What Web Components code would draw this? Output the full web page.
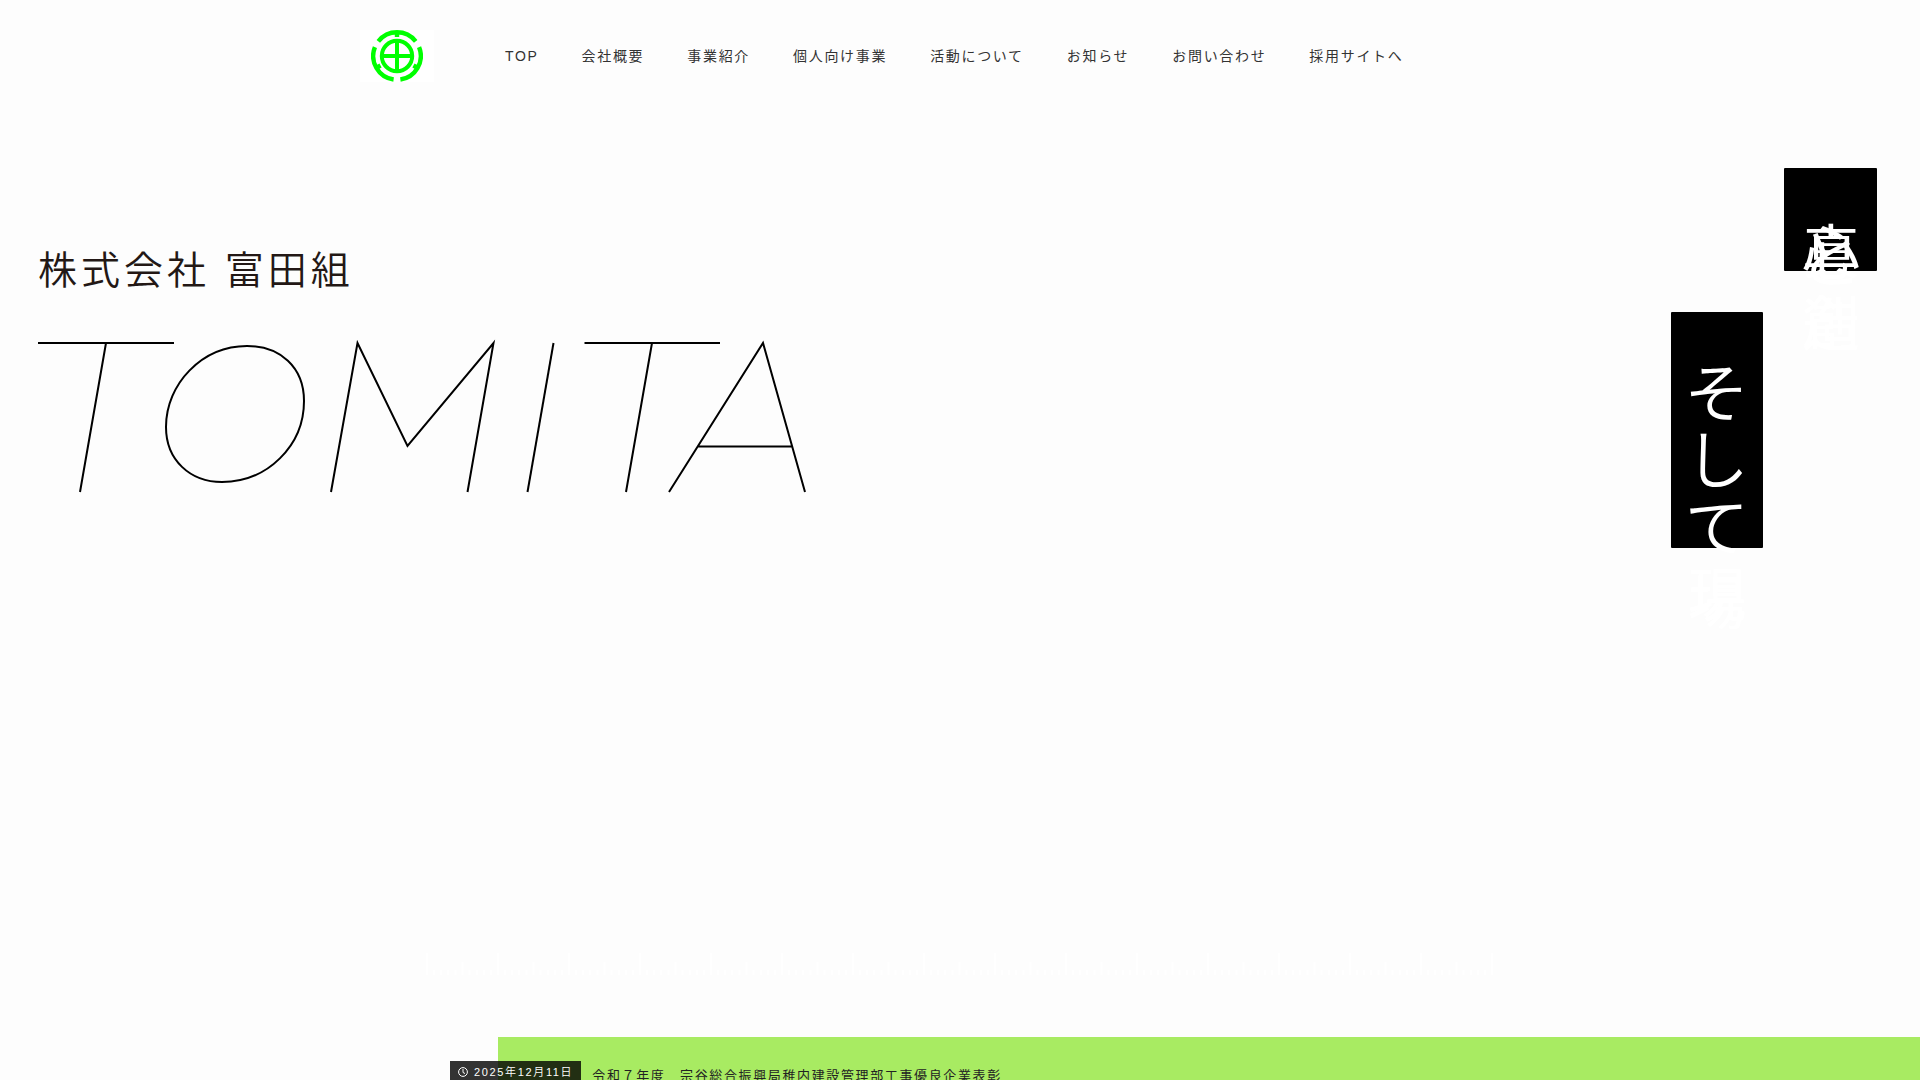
<!DOCTYPE html>
<html lang="ja">
<head>
<meta charset="utf-8">
<title>株式会社 富田組</title>
<style>
body { margin: 0; background: #fdfdfd; color: #333; font-family: "Liberation Sans", "Noto Sans CJK JP", sans-serif; overflow: hidden; }
</style>
</head>
<body>
<tomita-page></tomita-page>
<script>
const define = (name, html, after) => customElements.define(name, class extends HTMLElement {
  constructor() {
    super();
    this.attachShadow({ mode: "open" }).innerHTML = html;
    if (after) after(this.shadowRoot, this);
  }
});

define("brand-mark", `
<style>
:host { display: block; }
a { display: flex; background: #fff; padding: 0 11px; }
svg { display: block; width: 52px; height: 52px; }
</style>
<a href="#" aria-label="富田組">
<svg viewBox="0 0 52 52" fill="none" stroke="#0f0">
<circle cx="26" cy="26" r="15.2" stroke-width="4"/>
<path d="M26 10V42M10 26H42" stroke-width="4"/>
<g stroke-width="4.4">
<path id="arc" d="M7.300 11.300A23.800 23.800 0 0 1 44.700 11.300M26 3V7"/>
<use href="#arc" transform="rotate(120 26 26)"/>
<use href="#arc" transform="rotate(240 26 26)"/>
</g>
</svg></a>`);

define("nav-item", `
<style>
:host { display: block; }
a { color: inherit; text-decoration: none; font-size: 14px; line-height: 24px; letter-spacing: 0.12em; white-space: nowrap; }
</style>
<a href="#"><slot></slot></a>`);

define("site-header", `
<style>
:host { display: block; }
header { display: flex; align-items: center; width: 1200px; margin: 0 auto; padding-top: 30px; }
nav { display: flex; gap: 43px; margin-left: 71px; }
</style>
<header><brand-mark></brand-mark>
<nav><nav-item>TOP</nav-item><nav-item>会社概要</nav-item><nav-item>事業紹介</nav-item><nav-item>個人向け事業</nav-item><nav-item>活動について</nav-item><nav-item>お知らせ</nav-item><nav-item>お問い合わせ</nav-item><nav-item>採用サイトへ</nav-item></nav>
</header>`);

define("company-title", `
<style>
:host { display: block; }
h1 { margin: 0; font-size: 39px; line-height: 56px; font-weight: 350; letter-spacing: 4px; color: #231815; }
svg { display: block; width: 770px; height: 160px; margin-top: 37px; }
</style>
<h1>株式会社 富田組</h1>
<svg viewBox="0 0 770 160" fill="none" stroke="#000" stroke-width="2" role="img" aria-label="TOMITA">
<path d="M0 7H136M68 7L42 156"/>
<path d="M266 65C266 31 242 10 209 10C164 10 128 48 128 91C128 124 152 146 184 146C229 146 266 110 266 65Z"/>
<path d="M293 156L319.500 7L369.500 110L455.500 7L429.500 156"/>
<path d="M515.500 7L489.500 156"/>
<path d="M546.500 7H682M614 7L588 156"/>
<path d="M631 156L725 7L767 156M660 110.500H754"/>
</svg>`);

define("vertical-label", `
<style>
:host { display: block; }
p { margin: 0; box-sizing: border-box; width: var(--label-width, 92px); height: var(--label-height); padding: var(--label-inset, 48px) 0 0; border-radius: 1px; background: #000; color: #fff; writing-mode: vertical-rl; font-family: "Noto Sans CJK JP", sans-serif; font-size: 65px; line-height: 92px; letter-spacing: 2px; font-weight: 350; white-space: nowrap; }
</style>
<p><slot></slot></p>`);

define("catch-copy", `
<style>
:host { display: flex; flex-direction: row-reverse; align-items: flex-start; gap: 21px; }
.first { --label-height: 103px; --label-width: 93px; --label-inset: 54px; }
.second { --label-height: 236px; margin-top: 144px; }
/* kanji take almost no room along the line, so they pile up on the next character */
span { display: inline-block; height: 2px; font-size: 58px; font-weight: 400; }
.second span { height: 4px; padding-top: 4px; }
</style>
<vertical-label class="first"><span>真</span><span>心</span>と<span>創</span><span>造</span></vertical-label>
<vertical-label class="second">そして<span>現</span><span>場</span></vertical-label>`);

define("scale-ruler", `
<style>
:host { display: block; }
svg { display: block; width: 1068px; height: 22px; margin: 0 auto; }
</style>
<svg viewBox="0 0 1068 22" stroke="#fff" stroke-width="2"></svg>`, root => {
  let d = "";
  for (let i = 0; i <= 150; i++) {
    const h = i % 10 === 0 ? 22 : i % 5 === 0 ? 13 : 5;
    d += `M${(i * 7.1 + 1).toFixed(1)} 22v-${h}`;
  }
  root.querySelector("svg").innerHTML = `<path d="${d}"/>`;
});

define("news-bar", `
<style>
:host { display: block; }
.bar { display: flex; align-items: flex-start; gap: 11px; margin-left: calc(50% - 462px); padding: 24px 0; background: #a8eb62; }
time { display: flex; align-items: center; gap: 6px; margin-left: -48px; padding: 0 8px; background: rgba(0,0,0,.8); color: #fff; font-size: 11px; line-height: 22px; letter-spacing: 0.15em; font-weight: 350; }
svg { width: 10px; height: 10px; }
a { color: #222; text-decoration: none; font-size: 13px; line-height: 30px; letter-spacing: 0.125em; }
</style>
<div class="bar"><time datetime="2025-12-11"><svg viewBox="0 0 10 10" fill="none" stroke="#fff"><circle cx="5" cy="5" r="4.4"/><path d="M5 2V5.500L7 6.500"/></svg>2025年12月11日</time>
<a href="#">令和７年度　宗谷総合振興局稚内建設管理部工事優良企業表彰</a></div>`);

define("tomita-page", `
<style>
:host { display: flex; flex-direction: column; height: 100vh; overflow: hidden; }
.hero { display: flex; justify-content: space-between; align-items: flex-start; flex: 1; padding: 86px 43px 0 38px; }
company-title { margin-top: 75px; }
news-bar { height: 43px; margin-top: 62px; }
</style>
<site-header></site-header>
<section class="hero"><company-title></company-title><catch-copy></catch-copy></section>
<scale-ruler></scale-ruler>
<news-bar></news-bar>`);
</script>
</body>
</html>
